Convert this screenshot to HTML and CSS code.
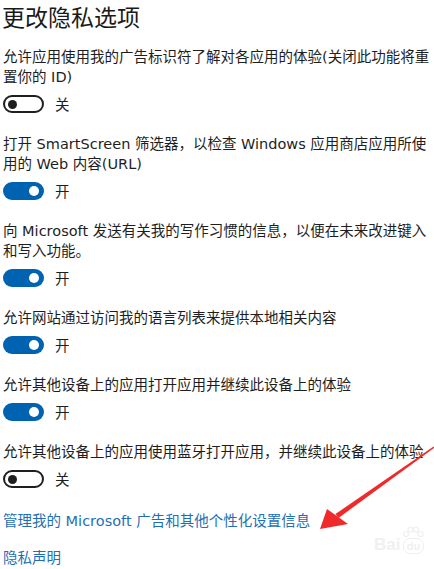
FILE: index.html
```html
<!DOCTYPE html>
<html lang="zh-CN">
<head>
<meta charset="utf-8">
<title>更改隐私选项</title>
<link rel="stylesheet" href="styles.css">
</head>
<body>
<main class="page">
  <h1 class="title">更改隐私选项</h1>

  <section class="option">
    <p class="label">允许应用使用我的广告标识符了解对各应用的体验(关闭此功能将重置你的 ID)</p>
    <div class="toggle-row">
      <span class="toggle off"><span class="knob"></span></span>
      <span class="state">关</span>
    </div>
  </section>

  <section class="option">
    <p class="label">打开 SmartScreen 筛选器，以检查 Windows 应用商店应用所使用的 Web 内容(URL)</p>
    <div class="toggle-row">
      <span class="toggle on"><span class="knob"></span></span>
      <span class="state">开</span>
    </div>
  </section>

  <section class="option">
    <p class="label">向 Microsoft 发送有关我的写作习惯的信息，以便在未来改进键入和写入功能。</p>
    <div class="toggle-row">
      <span class="toggle on"><span class="knob"></span></span>
      <span class="state">开</span>
    </div>
  </section>

  <section class="option">
    <p class="label">允许网站通过访问我的语言列表来提供本地相关内容</p>
    <div class="toggle-row">
      <span class="toggle on"><span class="knob"></span></span>
      <span class="state">开</span>
    </div>
  </section>

  <section class="option">
    <p class="label">允许其他设备上的应用打开应用并继续此设备上的体验</p>
    <div class="toggle-row">
      <span class="toggle on"><span class="knob"></span></span>
      <span class="state">开</span>
    </div>
  </section>

  <section class="option">
    <p class="label">允许其他设备上的应用使用蓝牙打开应用，并继续此设备上的体验</p>
    <div class="toggle-row">
      <span class="toggle off"><span class="knob"></span></span>
      <span class="state">关</span>
    </div>
  </section>

  <a class="link link-first" href="#">管理我的 Microsoft 广告和其他个性化设置信息</a>
  <a class="link link-second" href="#">隐私声明</a>
</main>

<svg class="arrow" width="134" height="100" viewBox="0 0 134 100" aria-hidden="true">
  <polygon points="134.4,7.6 133.6,6.4 35.5,74 38.5,78" fill="#f02a2a"/>
  <polygon points="20,89 27,69 48,84" fill="#f02a2a"/>
</svg>

<div class="watermark" aria-hidden="true">
  <span class="wm-bai">Bai</span>
  <span class="wm-du-wrap">
    <svg class="wm-paw" width="22" height="12" viewBox="0 0 22 12">
      <circle cx="4" cy="8" r="2.5" fill="none" stroke="#efefef" stroke-width="1.2"/>
      <circle cx="8.5" cy="3.5" r="2.5" fill="none" stroke="#efefef" stroke-width="1.2"/>
      <circle cx="14" cy="3.5" r="2.5" fill="none" stroke="#efefef" stroke-width="1.2"/>
      <circle cx="18.5" cy="8" r="2.5" fill="none" stroke="#efefef" stroke-width="1.2"/>
    </svg>
    <span class="wm-du">du</span>
  </span>
</div>
</body>
</html>
```

FILE: styles.css
```css
html, body {
  margin: 0;
  padding: 0;
  background: #ffffff;
}

body {
  width: 434px;
  height: 569px;
  overflow: hidden;
  position: relative;
  font-family: "DejaVu Sans", "Noto Sans CJK SC", sans-serif;
  color: #1e1e1e;
}

.page {
  display: flex;
  flex-direction: column;
  padding: 0 0 0 3px;
}

.title {
  margin: 0 0 0 -1px;
  font-family: "Noto Sans CJK SC", sans-serif;
  font-size: 23px;
  line-height: 32px;
  font-weight: 400;
  color: #1a1a1a;
}

.option {
  display: flex;
  flex-direction: column;
  margin-top: 20px;
}

.option:first-of-type {
  margin-top: 15px;
}

.label {
  margin: 0;
  font-size: 14.5px;
  line-height: 20px;
}

.toggle-row {
  display: flex;
  align-items: center;
  gap: 11px;
  margin-top: 7px;
  height: 20px;
}

.toggle {
  box-sizing: border-box;
  width: 41px;
  height: 18px;
  border-radius: 9px;
  display: flex;
  align-items: center;
  padding: 0 3px;
}

.toggle.off {
  border: 2px solid #1f1f1f;
  background: #ffffff;
  justify-content: flex-start;
}

.toggle.on {
  background: #0063b1;
  justify-content: flex-end;
  padding: 0 5px;
}

.knob {
  width: 9px;
  height: 9px;
  border-radius: 50%;
}

.toggle.on .knob {
  width: 10px;
  height: 10px;
  background: #ffffff;
}

.toggle.off .knob {
  background: #1f1f1f;
}

.state {
  font-family: "Noto Sans CJK SC", sans-serif;
  font-size: 14.5px;
  line-height: 20px;
}

.link {
  align-self: flex-start;
  font-size: 14.5px;
  line-height: 20px;
  color: #1f6fb4;
  text-decoration: none;
}

.link-first {
  margin-top: 22px;
}

.link-second {
  margin-top: 17px;
}

.arrow {
  position: absolute;
  left: 300px;
  top: 440px;
}

.watermark {
  position: absolute;
  left: 374px;
  top: 526px;
  display: flex;
  align-items: flex-end;
  gap: 2px;
  font-family: "Liberation Sans", sans-serif;
  font-weight: 700;
  color: #f0f0f0;
}

.wm-bai {
  font-size: 17px;
  line-height: 18px;
}

.wm-du-wrap {
  display: flex;
  flex-direction: column;
  align-items: center;
}

.wm-du {
  font-size: 11px;
  line-height: 14px;
  padding: 0 3px;
  border: 1.5px solid #efefef;
  border-radius: 7px;
}
```
